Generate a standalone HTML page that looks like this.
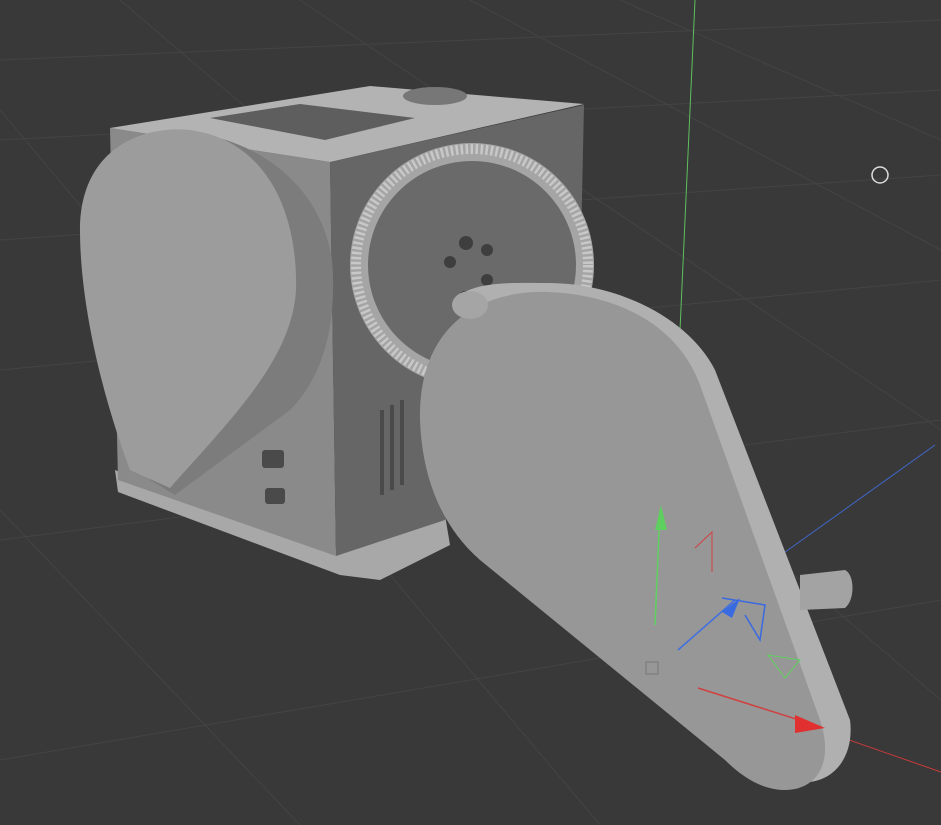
<!DOCTYPE html>
<html><head><meta charset="utf-8"><style>html,body{margin:0;padding:0;background:#393939;overflow:hidden}svg{display:block}</style></head><body>
<svg width="941" height="825" viewBox="0 0 941 825" xmlns="http://www.w3.org/2000/svg">
<rect width="941" height="825" fill="#393939"/>
<g stroke="#444" stroke-width="1" fill="none">
<path d="M0,60 L941,20 M0,140 L941,90 M0,240 L941,175 M0,370 L941,280 M0,540 L941,420 M0,760 L941,600"/>
<path d="M0,110 L600,825 M120,0 L941,700 M300,0 L941,430 M470,0 L941,250 M-200,300 L300,825 M620,0 L941,140"/>
</g>
<line x1="695" y1="0" x2="680" y2="330" stroke="#5fbf5f" stroke-width="1"/>
<line x1="935" y1="445" x2="760" y2="570" stroke="#3f66c8" stroke-width="1"/>
<line x1="700" y1="688" x2="941" y2="772" stroke="#c83a3a" stroke-width="1"/>
<circle cx="880" cy="175" r="8" fill="none" stroke="#ddd" stroke-width="1.5"/>
<path d="M115,470 L330,550 L445,515 L450,545 L380,580 L340,575 L118,492 Z" fill="#a8a8a8"/>
<path d="M110,128 L330,162 L336,556 L118,480 Z" fill="#8a8a8a"/>
<path d="M330,162 L584,105 L580,290 L470,420 L445,520 L336,556 Z" fill="#666"/>
<path d="M110,128 L370,86 L584,104 L330,162 Z" fill="#b3b3b3"/>
<path d="M210,118 L300,104 L415,118 L325,140 Z" fill="#5e5e5e"/>
<ellipse cx="435" cy="96" rx="32" ry="9" fill="#777"/>
<circle cx="472" cy="265" r="122" fill="#a5a5a5"/>
<circle cx="472" cy="265" r="104" fill="#6a6a6a"/>
<circle cx="472" cy="265" r="116" fill="none" stroke="#c8c8c8" stroke-width="10" stroke-dasharray="2.5 2.5"/>
<circle cx="466" cy="243" r="7" fill="#3e3e3e"/><circle cx="487" cy="250" r="6" fill="#3e3e3e"/><circle cx="450" cy="262" r="6" fill="#3e3e3e"/><circle cx="487" cy="280" r="6" fill="#3e3e3e"/><circle cx="465" cy="297" r="6" fill="#3e3e3e"/>
<g fill="#4a4a4a"><rect x="380" y="410" width="4" height="85"/><rect x="390" y="405" width="4" height="85"/><rect x="400" y="400" width="4" height="85"/></g>
<g fill="#4a4a4a"><rect x="262" y="450" width="22" height="18" rx="3"/><rect x="265" y="488" width="20" height="16" rx="3"/></g>
<path d="M180,132 C250,135 320,180 332,260 C338,330 320,380 290,410 L175,495 L150,480 Z" fill="#7c7c7c"/>
<path d="M80,230 C80,150 140,125 190,130 C265,140 298,210 296,290 C292,360 230,420 170,488 L130,470 C100,390 80,300 80,230 Z" fill="#9c9c9c"/>
<path d="M455,300 C470,280 520,283 548,283 C620,283 690,320 715,370 L850,720 C855,760 830,785 800,782 Z" fill="#b0b0b0"/>
<path d="M800,575 L845,570 C855,575 855,600 845,608 L800,610 Z" fill="#a3a3a3"/>
<path d="M420,420 C418,335 470,290 548,292 C625,295 680,330 700,385 L820,720 C835,765 815,790 785,790 C765,790 745,780 725,760 L480,560 C440,525 422,475 420,420 Z" fill="#979797"/>
<ellipse cx="470" cy="305" rx="18" ry="14" fill="#a5a5a5"/>
<line x1="655" y1="625" x2="660" y2="510" stroke="#60d060" stroke-width="1.5"/>
<path d="M655,530 L661,505 L667,530 Z" fill="#5fd05f"/>
<line x1="678" y1="650" x2="735" y2="600" stroke="#4070e0" stroke-width="1.5"/>
<path d="M722,612 L740,598 L732,618 Z" fill="#3a6ae0"/>
<path d="M722,598 L765,605 L760,640 L745,615" fill="none" stroke="#3a6ae0" stroke-width="1.5"/>
<path d="M695,548 L712,532 L712,572" fill="none" stroke="#d04040" stroke-width="1"/>
<path d="M768,655 L800,660 L785,678 Z" fill="none" stroke="#60d060" stroke-width="1"/>
<line x1="698" y1="688" x2="815" y2="725" stroke="#d04040" stroke-width="1.5"/>
<path d="M795,715 L825,728 L795,733 Z" fill="#e03030"/>
<rect x="646" y="662" width="12" height="12" fill="none" stroke="#777" stroke-width="1"/>
</svg>
</body></html>
